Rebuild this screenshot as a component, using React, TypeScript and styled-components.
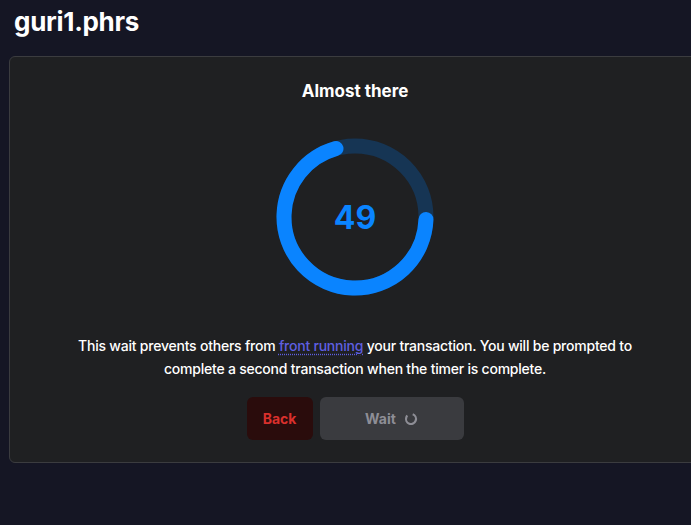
import React from "react";
import styled, { createGlobalStyle } from "styled-components";

const Global = createGlobalStyle`
  html, body { margin: 0; padding: 0; background: #151624; }
  body { font-family: Inter, "Noto Sans", sans-serif; color: #fff; overflow: hidden; }
`;

const Page = styled.div`
  width: 691px;
  height: 525px;
  background: #151624;
  display: flex;
  flex-direction: column;
`;

const Name = styled.h1`
  margin: 0;
  padding: 7px 0 0 14px;
  height: 56px;
  box-sizing: border-box;
  font-size: 26px;
  font-weight: 700;
  letter-spacing: -0.3px;
  line-height: 30px;
  color: #fff;
`;

const Card = styled.section`
  margin-left: 9px;
  width: 692px;
  height: 407px;
  box-sizing: border-box;
  background: #1f2022;
  border: 1px solid #3b3c3f;
  border-radius: 6px;
  display: flex;
  flex-direction: column;
  align-items: center;
  padding-top: 22px;
`;

const Title = styled.h2`
  margin: 0;
  font-size: 17px;
  font-weight: 700;
  line-height: 24px;
  color: #fff;
`;

const Ring = styled.div`
  position: relative;
  margin-top: 35px;
  width: 158px;
  height: 158px;
  display: flex;
  align-items: center;
  justify-content: center;
`;

const Count = styled.span`
  position: absolute;
  font-size: 32px;
  font-weight: 700;
  color: #0a84ff;
`;

const Text = styled.p`
  margin: 38px 0 0;
  width: 580px;
  text-align: center;
  font-size: 14px;
  font-weight: 500;
  letter-spacing: -0.22px;
  line-height: 23px;
  color: #fff;
`;

const Link = styled.a`
  color: #5f5fe0;
  text-decoration: underline dotted;
  text-underline-offset: 3px;
`;

const Buttons = styled.div`
  margin-top: 17px;
  display: flex;
  gap: 7px;
`;

const Button = styled.button<{ $variant: "back" | "wait" }>`
  height: 43px;
  border: none;
  border-radius: 6px;
  font-family: inherit;
  font-size: 14px;
  font-weight: 700;
  display: flex;
  align-items: center;
  justify-content: center;
  gap: 8px;
  width: ${(p) => (p.$variant === "back" ? "66px" : "144px")};
  background: ${(p) => (p.$variant === "back" ? "#2a0c0c" : "#3a3b3f")};
  color: ${(p) => (p.$variant === "back" ? "#d9302c" : "#8e8e96")};
`;

const R = 71;
const C = 2 * Math.PI * R;

export default function App() {
  const arc = 252 / 360;
  return (
    <Page>
      <Global />
      <Name>guri1.phrs</Name>
      <Card>
        <Title>Almost there</Title>
        <Ring>
          <svg width="158" height="158" viewBox="0 0 158 158">
            <circle cx="79" cy="79" r={R} fill="none" stroke="#163554" strokeWidth="15" />
            <circle
              cx="79"
              cy="79"
              r={R}
              fill="none"
              stroke="#0a84ff"
              strokeWidth="15"
              strokeLinecap="round"
              strokeDasharray={`${C * arc} ${C}`}
              transform="rotate(2 79 79)"
            />
          </svg>
          <Count>49</Count>
        </Ring>
        <Text>
          This wait prevents others from <Link>front running</Link> your transaction. You will be prompted to
          complete a second transaction when the timer is complete.
        </Text>
        <Buttons>
          <Button $variant="back">Back</Button>
          <Button $variant="wait">
            Wait
            <svg width="14" height="14" viewBox="0 0 14 14">
              <circle
                cx="7"
                cy="7"
                r="5"
                fill="none"
                stroke="#8e8e96"
                strokeWidth="2.2"
                strokeDasharray="25 6.4"
                transform="rotate(-70 7 7)"
              />
            </svg>
          </Button>
        </Buttons>
      </Card>
    </Page>
  );
}
